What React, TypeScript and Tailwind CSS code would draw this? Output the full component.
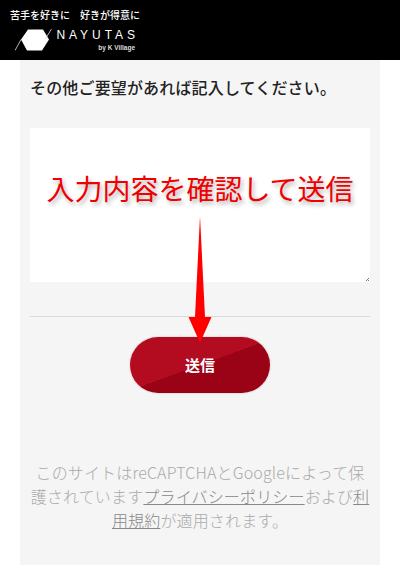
const CJK = "font-['Noto_Sans_CJK_JP','Liberation_Sans',sans-serif]";

function Logo() {
  return (
    <svg width="37" height="22" viewBox="0 0 37 22" className="shrink-0">
      <path d="M13 0.500H28L34 10.500L27 21.500H12L6 10.500z" fill="#fff" />
      <path d="M6 10.500L0 21.500" stroke="#ddd" strokeWidth="0.8" />
      <path d="M36.500 0L30 10.500" stroke="#ddd" strokeWidth="0.8" />
    </svg>
  );
}

function Header() {
  return (
    <header className="h-[60px] bg-black pl-[10px] pt-[8px] text-white">
      <div className="text-[10px] leading-[14px] font-medium whitespace-pre">苦手を好きに　好きが得意に</div>
      <div className="mt-[7px] ml-[5px] flex items-start">
        <Logo />
        <div className="ml-[5px] flex w-[78px] flex-col items-end">
          <div className="font-['Liberation_Sans',sans-serif] text-[12px] leading-[12px] tracking-[0.33em] mr-[-4px] whitespace-nowrap">NAYUTAS</div>
          <div className="mt-[3px] font-['Liberation_Sans',sans-serif] text-[6.5px] leading-[8px] font-bold text-[#ddd] whitespace-nowrap">by K Village</div>
        </div>
      </div>
    </header>
  );
}

function Arrow() {
  return (
    <svg width="30" height="130" viewBox="0 0 30 130" className="absolute left-[185px] top-[214px]">
      <path d="M15 2L20 103H26.500L15 129L3.500 103H10z" fill="#ff0000" />
    </svg>
  );
}

function ResizeGrip() {
  return (
    <svg width="5" height="5" viewBox="0 0 5 5" className="absolute left-[365px] top-[277px]">
      <path d="M1 4L4 1M3 4L4 3" stroke="#555" strokeWidth="0.8" />
    </svg>
  );
}

export default function App() {
  return (
    <div className={"relative h-[565px] w-[400px] overflow-hidden bg-white " + CJK}>
      <Header />
      <main className="mx-[20px] h-[505px] bg-[#f5f5f5] px-[10px] pt-[15px]">
        <p className="text-[16px] leading-[24px] font-medium tracking-[0.01em] whitespace-nowrap text-[#222]">その他ご要望があれば記入してください。</p>
        <textarea className="mt-[29px] block h-[154px] w-[340px] resize-none bg-white outline-none" aria-label="その他ご要望" />
        <hr className="mt-[34px] border-t border-[#d9d9d9]" />
        <div className="mt-[20px] flex justify-center">
          <button className="h-[56px] w-[140px] rounded-full bg-[linear-gradient(160deg,#b30b20_0%,#b30b20_50%,#9a0216_50%,#9a0216_100%)] text-[15px] font-bold text-white shadow-[0_0_2px_rgba(180,10,30,0.3)]">
            送信
          </button>
        </div>
        <p className="mt-[67px] text-center text-[16px] leading-[24px] tracking-[0.01em] font-light text-[#aaa]">
          このサイトはreCAPTCHAとGoogleによって保護されています<span className="text-[#888] underline">プライバシーポリシー</span>および<span className="text-[#888] underline">利用規約</span>が適用されます。
        </p>
      </main>
      <div className="absolute left-0 top-[169px] w-[400px] text-center text-[28px] leading-[38px] font-normal text-[#f00000] [text-shadow:2px_3px_4px_rgba(0,0,0,0.3)]">
        入力内容を確認して送信
      </div>
      <Arrow />
      <ResizeGrip />
    </div>
  );
}
